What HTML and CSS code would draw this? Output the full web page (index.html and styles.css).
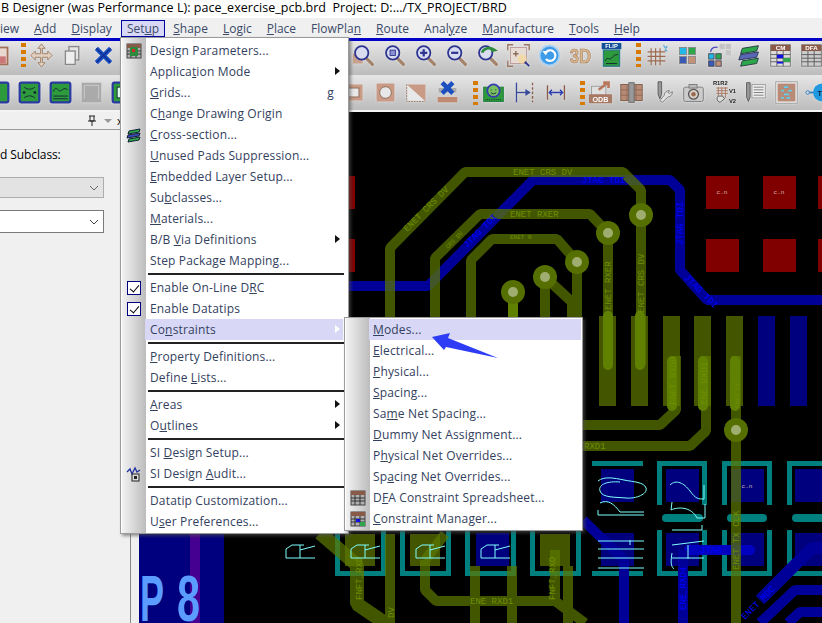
FILE: index.html
```html
<!DOCTYPE html>
<html lang="en">
<head>
  <meta charset="UTF-8" />
  <meta name="viewport" content="width=device-width, initial-scale=1.0"/>
  <title>PCB Designer - Setup menu</title>
  <link rel="stylesheet" href="styles.css">
</head>
<body>

  <!-- shared icon parts -->
  <svg class="defs" width="0" height="0">
    <defs>
      <symbol id="lens" viewBox="0 0 28 28">
        <line x1="17" y1="17" x2="24" y2="24" stroke="#a5826a" stroke-width="3.5" stroke-linecap="round"/>
        <circle cx="12" cy="11" r="7.5" fill="#d9dcef" stroke="#2c3490" stroke-width="2"/>
      </symbol>
      <symbol id="board" viewBox="0 0 28 28">
        <rect x="3" y="3" width="22" height="22" rx="2" fill="#2d9a3c" stroke="#2b3aa0" stroke-width="2.5"/>
      </symbol>
      <symbol id="sheet" viewBox="0 0 16 16">
        <rect x="1" y="1" width="14" height="14" fill="#b0b0b0" stroke="#444"/>
        <rect x="1" y="1" width="14" height="4" fill="#8a5a48"/>
        <path d="M1 8H15M1 11H15M5 5V15M10 5V15" stroke="#333" fill="none"/>
      </symbol>
    </defs>
  </svg>

  <div class="titlebar">B Designer (was Performance L): pace_exercise_pcb.brd &nbsp;Project: D:.../TX_PROJECT/BRD</div>

  <nav class="menubar">
    <span class="mi first">iew</span>
    <span class="mi"><u>A</u>dd</span>
    <span class="mi"><u>D</u>isplay</span>
    <span class="mi open">Set<u>u</u>p</span>
    <span class="mi"><u>S</u>hape</span>
    <span class="mi"><u>L</u>ogic</span>
    <span class="mi"><u>P</u>lace</span>
    <span class="mi">FlowPla<u>n</u></span>
    <span class="mi"><u>R</u>oute</span>
    <span class="mi">Anal<u>y</u>ze</span>
    <span class="mi"><u>M</u>anufacture</span>
    <span class="mi"><u>T</u>ools</span>
    <span class="mi"><u>H</u>elp</span>
  </nav>
  <div class="blueline"></div>

  <div class="toolbar row1">
    <span class="tool"><svg class="ico" viewBox="0 0 28 28"><rect x="4" y="5" width="19" height="19" fill="#e8d8d0" stroke="#a5705a" stroke-width="2"/><rect x="6" y="15" width="15" height="8" fill="#c77"/></svg></span>
    <span class="grip"></span>
    <span class="tool"><svg class="ico" viewBox="0 0 28 28"><path d="M14 1l4 5h-3v6h6V9l5 5-5 5v-3h-6v6h3l-4 5-4-5h3v-6H7v3l-5-5 5-5v3h6V6h-3z" fill="#e2d0c0" stroke="#9a7a60"/></svg></span>
    <span class="tool"><svg class="ico" viewBox="0 0 28 28"><rect x="10" y="4" width="11" height="15" fill="#e4e4e4" stroke="#888" stroke-width="1.5"/><rect x="6" y="9" width="11" height="15" fill="#eee" stroke="#888" stroke-width="1.5"/></svg></span>
    <span class="tool"><svg class="ico" viewBox="0 0 28 28"><path d="M6 6L22 22M22 6L6 22" stroke="#1c4fc0" stroke-width="5"/><path d="M6 6L22 22M22 6L6 22" stroke="#0c2c90" stroke-width="1.5"/></svg></span>
    <span class="gap gap-a"></span>
    <span class="tool"><svg class="ico" viewBox="0 0 28 28"><rect x="2" y="12" width="11" height="11" fill="#c9a08c"/><use href="#lens"/></svg></span>
    <span class="tool"><svg class="ico" viewBox="0 0 28 28"><use href="#lens"/><rect x="9" y="8" width="6" height="6" fill="#8a90d0" stroke="#2c3490"/></svg></span>
    <span class="tool"><svg class="ico" viewBox="0 0 28 28"><use href="#lens"/><path d="M8 11h8M12 7v8" stroke="#2c3490" stroke-width="2.5"/></svg></span>
    <span class="tool"><svg class="ico" viewBox="0 0 28 28"><use href="#lens"/><path d="M8 11h8" stroke="#2c3490" stroke-width="2.5"/></svg></span>
    <span class="tool"><svg class="ico" viewBox="0 0 28 28"><use href="#lens"/><path d="M8 11c1-5 8-7 14-3l-4 1" stroke="#2f8a3c" stroke-width="3" fill="none"/></svg></span>
    <span class="tool"><svg class="ico" viewBox="0 0 28 28"><path d="M2 8V2h6M20 2h6v6M2 20v6h6" fill="none" stroke="#9a7560" stroke-width="1.5"/><rect x="5" y="5" width="18" height="18" fill="#e6dcd4" stroke="#b99" /><path d="M11 9v6M8 12h6" stroke="#8a6a55" stroke-width="1.5"/><circle cx="18" cy="18" r="5" fill="#f2d9a8"/><line x1="21" y1="21" x2="26" y2="26" stroke="#2c3490" stroke-width="2"/></svg></span>
    <span class="tool"><svg class="ico" viewBox="0 0 28 28"><circle cx="14" cy="14" r="11" fill="#3d9be8" stroke="#a8d0f0" stroke-width="2"/><path d="M9 12a6 6 0 1 1 1 6" fill="none" stroke="#fff" stroke-width="2.5"/><path d="M6 9l6 0 -2 5z" fill="#fff"/></svg></span>
    <span class="tool"><svg class="ico" viewBox="0 0 28 28"><text x="2" y="22" class="t3d" textLength="24" lengthAdjust="spacingAndGlyphs">3D</text></svg></span>
    <span class="tool"><svg class="ico" viewBox="0 0 28 28"><rect x="3" y="0" width="22" height="7" fill="#12509a"/><text x="14" y="6" class="tflip">FLIP</text><rect x="5" y="8" width="18" height="18" fill="#2d9a3c" stroke="#2a7a8a" stroke-width="1.5"/><path d="M7 20c3-6 4 0 7-3s3-4 7-4M8 23h12" stroke="#123" fill="none"/></svg></span>
    <span class="grip g2"></span>
    <span class="tool"><svg class="ico" viewBox="0 0 28 28"><path d="M4 10H24M4 15H24M4 20H24M8 6V25M13 6V25M18 6V25" stroke="#9a6a50" stroke-width="1.3"/><path d="M22 2l1 3 3-1-2 3 2 2-3-1" fill="none" stroke="#3a9bd8"/></svg></span>
    <span class="tool"><svg class="ico" viewBox="0 0 28 28"><rect x="5" y="5" width="8" height="8" fill="#22b8e8" stroke="#888"/><rect x="15" y="5" width="8" height="8" fill="#2ca84a" stroke="#888"/><rect x="5" y="15" width="8" height="8" fill="#3a5ab8" stroke="#888"/><rect x="15" y="15" width="8" height="8" fill="#c49078" stroke="#888"/></svg></span>
    <span class="tool"><svg class="ico" viewBox="0 0 28 28"><rect x="15" y="1" width="6" height="6" fill="#c4c4c4"/><rect x="22" y="1" width="6" height="6" fill="#c4c4c4"/><rect x="22" y="8" width="6" height="6" fill="#c4c4c4"/><rect x="3" y="12" width="6" height="6" fill="#22b8e8" stroke="#445"/><rect x="11" y="12" width="6" height="6" fill="#2ca84a" stroke="#445"/><rect x="3" y="20" width="6" height="6" fill="#3a5ab8" stroke="#445"/><rect x="11" y="20" width="6" height="6" fill="#c49078" stroke="#445"/><path d="M5 10c1-5 5-6 8-5" fill="none" stroke="#4a4ac0" stroke-width="1.5"/></svg></span>
    <span class="tool"><svg class="ico" viewBox="0 0 28 28"><path d="M6 6L24 3 22 9 4 12z" fill="#2ca84a" stroke="#234"/><path d="M4 13L24 10 22 16 2 19z" fill="#5a66b8" stroke="#234"/><path d="M6 20L24 17 22 23 4 26z" fill="#2ca84a" stroke="#234"/></svg></span>
    <span class="tool"><svg class="ico" viewBox="0 0 28 28"><rect x="3" y="2" width="22" height="24" fill="#ddd" stroke="#777"/><rect x="3" y="2" width="22" height="7" fill="#8a5a48"/><text x="14" y="8" class="tcm">CM</text><path d="M3 13H25M3 17H25M3 21H25M10 9V26M17 9V26" stroke="#555"/><rect x="10" y="13" width="7" height="4" fill="#1010e0"/><rect x="17" y="17" width="8" height="4" fill="#2ca84a"/><rect x="10" y="21" width="7" height="2" fill="#1010e0"/></svg></span>
    <span class="tool"><svg class="ico" viewBox="0 0 28 28"><rect x="3" y="2" width="22" height="24" fill="#ccc" stroke="#777"/><rect x="3" y="2" width="22" height="7" fill="#8a5a48"/><text x="14" y="8" class="tcm">DFA</text><path d="M3 13H25M3 17H25M3 21H25M10 9V26M17 9V26" stroke="#555"/></svg></span>
  </div>

  <div class="toolbar row2">
    <span class="tool"><svg class="ico" viewBox="0 0 28 28"><use href="#board"/></svg></span>
    <span class="tool"><svg class="ico" viewBox="0 0 28 28"><use href="#board"/><path d="M8 8c4 3 8 3 12 0M8 20c4-3 8-3 12 0" stroke="#123" fill="none"/><circle cx="8" cy="14" r="1.5" fill="#123"/><circle cx="20" cy="14" r="1.5" fill="#123"/></svg></span>
    <span class="tool"><svg class="ico" viewBox="0 0 28 28"><use href="#board"/><path d="M6 13c3-7 4-2 7-1s4-5 9-1M6 18H22M6 21H22" stroke="#123" fill="none"/></svg></span>
    <span class="tool"><svg class="ico" viewBox="0 0 28 28"><rect x="3" y="3" width="22" height="22" fill="#aaa"/><path d="M6 21V6H22V21" fill="none" stroke="#ccc"/></svg></span>
    <span class="tool"><svg class="ico" viewBox="0 0 28 28"><use href="#board"/><rect x="8" y="8" width="12" height="12" fill="#dfe" stroke="#123"/></svg></span>
    <span class="gap gap-b"></span>
    <span class="tool"><svg class="ico" viewBox="0 0 28 28"><rect x="3" y="5" width="20" height="18" rx="1" fill="#c99a85"/><rect x="7" y="9" width="12" height="10" fill="#e8e8e8" stroke="#8a6a55"/></svg></span>
    <span class="tool"><svg class="ico" viewBox="0 0 28 28"><rect x="4" y="4" width="20" height="20" rx="1" fill="#c99a85"/><circle cx="14" cy="14" r="6.5" fill="#e8e8e8" stroke="#8a6a55"/></svg></span>
    <span class="tool"><svg class="ico" viewBox="0 0 28 28"><path d="M3 5H24V24z" fill="#c99a85"/><path d="M3 5V24H24" fill="#e8e8e8" stroke="#8a6a55" stroke-dasharray="2 1"/></svg></span>
    <span class="tool"><svg class="ico" viewBox="0 0 28 28"><rect x="4" y="9" width="20" height="5" fill="#aaa"/><path d="M8 3L20 15M20 3L8 15" stroke="#1c4fc0" stroke-width="5"/><rect x="3" y="19" width="22" height="6" fill="#c08a72"/></svg></span>
    <span class="grip g3"></span>
    <span class="tool"><svg class="ico" viewBox="0 0 28 28"><rect x="3" y="8" width="22" height="16" fill="#2d9a3c" stroke="#1a7a3a"/><path d="M5 22H23" stroke="#123" stroke-dasharray="1 1"/><circle cx="14" cy="12" r="7" fill="#7ac060" stroke="#3a3ab0" stroke-width="2"/><path d="M11 11h1M16 11h1M11 14c2 2 4 2 6 0" stroke="#123" fill="none"/></svg></span>
    <span class="tool"><svg class="ico" viewBox="0 0 28 28"><path d="M5 3V25" stroke="#3a4a9a" stroke-width="1.5"/><path d="M23 3V25" stroke="#8a5a48" stroke-width="1.5" stroke-dasharray="3 2"/><path d="M5 14H20" stroke="#3a4a9a" stroke-width="1.5"/><path d="M15 10l6 4-6 4z" fill="#3a4a9a"/></svg></span>
    <span class="tool"><svg class="ico" viewBox="0 0 28 28"><path d="M5 6V22M24 6V22" stroke="#8a5a48" stroke-width="1.5"/><path d="M7 14H22M10 11l-3 3 3 3M19 11l3 3-3 3" stroke="#2a3ab0" stroke-width="1.5" fill="none"/></svg></span>
    <span class="grip g4"></span>
    <span class="tool"><svg class="ico" viewBox="0 0 28 28"><rect x="4" y="7" width="16" height="10" fill="#e0e0e0" stroke="#999"/><path d="M12 11l10-8M17 3h6v6" stroke="#b9775c" stroke-width="3" fill="none"/><rect x="1" y="16" width="26" height="10" rx="1" fill="#a87a66"/><text x="14" y="24.5" class="todb">ODB</text></svg></span>
    <span class="tool"><svg class="ico" viewBox="0 0 28 28"><rect x="2" y="5" width="24" height="18" fill="#b98a75" stroke="#7a5a48"/><path d="M9 5V23M19 5V23M2 11H26M2 17H26" stroke="#8a6a58"/><rect x="11" y="3" width="6" height="22" fill="#999" stroke="#666"/></svg></span>
    <span class="tool"><svg class="ico" viewBox="0 0 28 28"><path d="M9 2h4v14l-2 5-2-5z" fill="#999" stroke="#555"/><path d="M22 12a5 5 0 0 0-6 5l-5 6 3 2 6-6a5 5 0 0 0 5-6l-3 2-2-1z" fill="#e0e0e0" stroke="#777"/></svg></span>
    <span class="tool"><svg class="ico" viewBox="0 0 28 28"><rect x="3" y="8" width="22" height="16" rx="2" fill="#ccc" stroke="#777"/><rect x="9" y="5" width="9" height="4" fill="#bbb" stroke="#777"/><circle cx="14" cy="16" r="5.5" fill="#d8d0c8" stroke="#555" stroke-width="1.5"/><circle cx="14" cy="16" r="2.5" fill="#9a6a50"/></svg></span>
    <span class="tool"><svg class="ico" viewBox="0 0 28 28"><text x="1" y="6" class="tsm">R1R2</text><path d="M5 9H18M5 12H18M5 15H18M7 8V20M11 8V20M15 8V20" stroke="#a5705a"/><path d="M7 18a4 4 0 0 0 2 7l5-4-2-3z" fill="#ddd" stroke="#555"/><text x="19" y="14" class="tsm">V1</text><text x="19" y="26" class="tsm">V2</text></svg></span>
    <span class="tool"><svg class="ico" viewBox="0 0 28 28"><path d="M4 3h4v16l-2 5-2-5z" fill="#999" stroke="#555"/><rect x="10" y="5" width="15" height="15" fill="#eee" stroke="#999"/><path d="M12 8H23M12 11H23M12 14H23M12 17H23" stroke="#777"/></svg></span>
    <span class="tool"><svg class="ico" viewBox="0 0 28 28"><rect x="2" y="2" width="24" height="24" fill="#eee" stroke="#999"/><rect x="4" y="4" width="20" height="20" fill="#b98a75"/><path d="M11 8h5M8 12h3M16 12h4M11 16h6M8 20h3M14 20h4" stroke="#5cd0f0" stroke-width="2"/></svg></span>
    <span class="tool"><svg class="ico" viewBox="0 0 28 28"><circle cx="3" cy="14" r="2" fill="none" stroke="#2a7ac0"/><path d="M5 14h6" stroke="#2a7ac0" stroke-width="2"/><circle cx="19" cy="14" r="10" fill="#1f9ae0"/><text x="19" y="18" class="ttp">TP</text></svg></span>
  </div>

  <div class="workspace">
    <aside class="panel">
      <div class="panel-head">
        <svg class="pin" viewBox="0 0 10 12" width="10" height="12"><path d="M2 1H8M3 1V6H7V1M1 6H9M5 6V11" stroke="#222" fill="none"/></svg>
        <span class="drop"></span>
        <span class="close">x</span>
      </div>
      <div class="panel-body">
        <p class="lbl">d Subclass:</p>
        <div class="combo off"><svg viewBox="0 0 10 6" width="10" height="6"><path d="M1 1l4 4 4-4" fill="none" stroke="#666"/></svg></div>
        <div class="combo"><svg viewBox="0 0 10 6" width="10" height="6"><path d="M1 1l4 4 4-4" fill="none" stroke="#444"/></svg></div>
      </div>
    </aside>
    <div class="sash"></div>

    <svg class="board" viewBox="139 112 683 511" xmlns="http://www.w3.org/2000/svg">
      <!-- red pads -->
      <g fill="#800000">
        <rect x="345" y="176" width="10" height="33"/><rect x="706" y="176" width="33" height="33"/><rect x="763" y="176" width="33" height="33"/><rect x="818" y="176" width="10" height="33"/>
        <rect x="345" y="239" width="10" height="33"/><rect x="706" y="239" width="33" height="33"/><rect x="763" y="239" width="33" height="33"/><rect x="818" y="239" width="10" height="33"/>
      </g>
      <text x="722" y="194" class="pad-t">c.n</text><text x="779" y="194" class="pad-t">c.n</text>

      <!-- bottom row blue pads and frames -->
      <g fill="#00007f">
        <rect x="139" y="534" width="85" height="90"/>
        <rect x="601" y="469" width="33" height="33"/><rect x="601" y="533" width="33" height="33"/>
        <rect x="666" y="469" width="33" height="33"/><rect x="666" y="533" width="33" height="33"/>
        <rect x="731" y="469" width="33" height="33"/><rect x="731" y="533" width="33" height="33"/>
        <rect x="795" y="469" width="33" height="33"/><rect x="795" y="533" width="33" height="33"/>
        <rect x="476" y="533" width="33" height="33"/>
      </g>
      <g fill="#007f7f">
        <path id="fr1" d="M592 461h51v5h-5v105h5v5h-51v-5h5v-105h-5zM597 466v105h41v-105z" fill-rule="evenodd"/>
        <path d="M657 461h50v5h-50zM657 461h5v44h-5zM702 461h5v44h-5zM657 530h5v46h-5zM702 530h5v46h-5zM657 571h50v5h-50z"/>
        <rect x="662" y="514" width="41" height="8" rx="4"/>
        <path d="M722 461h50v5h-50zM722 461h5v44h-5zM767 461h5v44h-5zM722 530h5v46h-5zM767 530h5v46h-5zM722 571h50v5h-50z"/>
        <rect x="727" y="514" width="40" height="8" rx="4"/>
        <path d="M787 461h40v5h-40zM787 461h5v44h-5zM787 530h5v46h-5zM787 571h40v5h-40z"/>
        <rect x="792" y="514" width="40" height="8" rx="4"/>
        <path d="M335 531h5v40h41v-40h5v45h-51zM400 531h5v40h41v-40h5v45h-51zM465 531h5v40h41v-40h5v45h-51zM530 531h5v40h41v-40h5v45h-51z"/>
      </g>

      <!-- blue traces -->
      <g fill="none" stroke="#000099" stroke-linejoin="bevel">
        <polyline stroke-width="10" points="138,286 428,286 533,180 670,180 680,190 680,270 707,300 822,300"/>
        <polyline stroke-width="10" points="583,520 624,560 624,623"/>
        <polyline stroke-width="10" points="689,550 750,550" stroke="#0000c0" stroke-linecap="round"/>
        <polyline stroke-width="10" points="683,550 683,623"/>
        <polyline stroke-width="12" points="822,548 812,548 760,600"/>
        <polyline stroke-width="10" points="822,590 795,590 760,623"/>
        <polyline stroke-width="10" points="822,612 800,612 788,623"/>
      </g>
      <rect x="758" y="316" width="17" height="90" fill="#00007f"/>
      <rect x="790" y="316" width="17" height="90" fill="#00007f"/>
      <rect x="190" y="534" width="10" height="90" fill="#8000a0" opacity=".55"/>

      <!-- olive traces -->
      <g fill="#445500">
        <rect x="599" y="316" width="17" height="90"/><rect x="631" y="316" width="17" height="90"/>
        <rect x="663" y="316" width="17" height="90"/><rect x="694" y="316" width="17" height="90"/><rect x="726" y="316" width="17" height="90"/>
        <rect x="345" y="534" width="30" height="32"/><rect x="410" y="534" width="30" height="32"/><rect x="540" y="534" width="30" height="32"/>
      </g>
      <g fill="none" stroke="#5c7800" stroke-linejoin="bevel" opacity=".72">
        <polyline stroke-width="10" points="390,323 390,248 465,172 623,172 641,190 641,365"/>
        <polyline stroke-width="10" points="435,323 435,258 480,214 590,214 608,233 608,365"/>
        <polyline stroke-width="10" points="471,323 471,260 492,239 557,239 577,262 577,323"/>
        <polyline stroke-width="10" points="545,277 572,302 572,323"/>
        <polyline stroke-width="10" points="545,277 545,323"/>
        <polyline stroke-width="10" points="513,292 513,323"/>
        <polyline stroke-width="10" points="583,425 660,425 676,410 676,356" />
        <polyline stroke-width="10" points="583,446 690,446 706,431 706,356"/>
        <polyline stroke-width="10" points="736,356 736,623"/>
        <polyline stroke-width="14" points="320,533 357,565 357,604 385,623"/>
        <polyline stroke-width="10" points="390,534 390,623"/>
        <polyline stroke-width="10" points="425,560 425,590 436,601 555,601 585,623"/>
        <polyline stroke-width="10" points="445,534 425,560"/>
        <polyline stroke-width="10" points="475,566 475,623"/>
        <polyline stroke-width="10" points="512,566 512,623"/>
        <polyline stroke-width="10" points="555,550 555,601"/>
        <polyline stroke-width="10" points="568,566 568,623"/>
      </g>
      <g fill="none" stroke="#5f8000" stroke-linecap="round" stroke-width="10">
        <line x1="608" y1="316" x2="608" y2="365"/><line x1="640" y1="316" x2="640" y2="365"/>
        <line x1="672" y1="361" x2="672" y2="406"/><line x1="703" y1="361" x2="703" y2="406"/><line x1="735" y1="361" x2="735" y2="406"/>
        <line x1="513" y1="292" x2="513" y2="316"/>
      </g>

      <!-- vias -->
      <g fill="#557000"><circle cx="513" cy="292" r="12"/><circle cx="545" cy="277" r="12"/><circle cx="577" cy="262" r="12"/><circle cx="608" cy="233" r="12"/><circle cx="641" cy="215" r="12"/><circle cx="736" cy="430" r="12"/></g>
      <g fill="#a0ad70"><circle cx="513" cy="292" r="5"/><circle cx="545" cy="277" r="5"/><circle cx="577" cy="262" r="5"/><circle cx="608" cy="233" r="5"/><circle cx="641" cy="215" r="5"/><circle cx="736" cy="430" r="5"/></g>

      <!-- net names -->
      <g class="net olive">
        <text x="513" y="175">ENET CRS DV</text>
        <text x="510" y="217">ENET RXER</text>
        <text x="510" y="239" class="tiny">ENET R</text>
        <text x="407" y="232" transform="rotate(-45 407 232)">ENET CRS DV</text>
        <text x="448" y="249" class="tiny" transform="rotate(-45 448 249)">CRS DV</text>
        <text transform="translate(611 310) rotate(-90)">ENET RXER</text>
        <text transform="translate(644 313) rotate(-90)">ENET CRS DV</text>
        <text transform="translate(676 405) rotate(-90)">FNFT RXD0</text>
        <text transform="translate(707 405) rotate(-90)">ENE RXD1</text>
        <text transform="translate(739 408) rotate(-90)" class="tiny">ENET TX</text>
        <text x="584" y="449">RXD1</text>
        <text transform="translate(739 570) rotate(-90)">ENET TX CLK</text>
        <text transform="translate(362 600) rotate(-90)">FNFT_RXD</text>
        <text transform="translate(394 618) rotate(-90)">DV</text>
        <text x="470" y="604">ENE  RXD1</text>
        <text transform="translate(555 600) rotate(-90)">FNFT_RXD</text>
      </g>
      <g class="net blue">
        <text x="582" y="183">JTAG TDI</text>
        <text x="467" y="248" transform="rotate(-45 467 248)">JTAG TDI</text>
        <text transform="translate(683 245) rotate(-90)">JTAG TDI</text>
        <text x="684" y="278" transform="rotate(45 684 278)">JTAG TDI</text>
        <text x="700" y="553">JTAG</text>
        <text transform="translate(686 610) rotate(-90)">ENE_RXD4</text>
        <text x="745" y="620" transform="rotate(-45 745 620)">ENET MDC</text>
      </g>

      <!-- silkscreen -->
      <g fill="none" stroke="#7fffff">
        <path d="M598 481c6-5 16-3 26-1s20 2 22 8-10 11-20 10-24 0-26-7 8-10 20-9M600 503c8-4 14 1 20 9l24 0M598 510v5h46M598 541h46M630 545v-5M598 549c10 0 20 0 46 0M598 558h45M598 568h46"/>
        <path d="M670 485c6-6 14-2 20 6s8 8 14 8v-14M672 502l-1 8c6-3 20-4 26 8h8v-14M672 530h30v-5M672 553c-2 12 0 14 2 16M672 545l32-4M688 545v14M672 558h32"/>
        <path d="M286 558v-9l6-4h12M300 545v13M300 550l15-4M286 558h29"/>
        <path d="M351 558v-9l6-4h12M365 545v13M365 550l15-4M351 558h29"/>
        <path d="M416 558v-9l6-4h12M430 545v13M430 550l15-4M416 558h29"/>
        <path d="M481 558v-9l6-4h12M495 545v13M495 550l15-4M481 558h29"/>
      </g>
      <text x="747" y="488" class="pad-t">c.n</text>
      <text x="140" y="621" class="p8" textLength="24" lengthAdjust="spacingAndGlyphs">P</text>
      <text x="177" y="621" class="p8" textLength="23" lengthAdjust="spacingAndGlyphs">8</text>
    </svg>
  </div>

  <!-- Setup menu -->
  <ul class="menu setup">
    <li><span class="gut"><svg width="16" height="16" viewBox="0 0 16 16"><use href="#sheet"/><rect x="4" y="4" width="8" height="9" fill="#2d8a3c"/><rect x="6" y="6" width="3" height="3" fill="#d22"/></svg></span><span class="txt">Desi<u>g</u>n Parameters...</span></li>
    <li class="sub"><span class="gut"></span><span class="txt">Applica<u>t</u>ion Mode</span></li>
    <li><span class="gut"></span><span class="txt"><u>G</u>rids...</span><span class="key">g</span></li>
    <li><span class="gut"></span><span class="txt">C<u>h</u>ange Drawing Origin</span></li>
    <li><span class="gut"><svg width="16" height="16" viewBox="0 0 16 16"><path d="M3 4L14 2 13 5 2 7z" fill="#2ca84a" stroke="#123"/><path d="M2 8L14 6 13 9 1 11z" fill="#3a4ab8" stroke="#123"/><path d="M3 12L14 10 13 13 2 15z" fill="#2ca84a" stroke="#123"/></svg></span><span class="txt"><u>C</u>ross-section...</span></li>
    <li><span class="gut"></span><span class="txt"><u>U</u>nused Pads Suppression...</span></li>
    <li><span class="gut"></span><span class="txt"><u>E</u>mbedded Layer Setup...</span></li>
    <li><span class="gut"></span><span class="txt">Su<u>b</u>classes...</span></li>
    <li><span class="gut"></span><span class="txt"><u>M</u>aterials...</span></li>
    <li class="sub"><span class="gut"></span><span class="txt">B/B <u>V</u>ia Definitions</span></li>
    <li><span class="gut"></span><span class="txt">Step Package Mapping...</span></li>
    <li class="sep"></li>
    <li><span class="gut"><span class="check"></span></span><span class="txt">Enable On-Line D<u>R</u>C</span></li>
    <li><span class="gut"><span class="check"></span></span><span class="txt">Enable Datatips</span></li>
    <li class="sub hot"><span class="gut"></span><span class="txt">Co<u>n</u>straints</span></li>
    <li class="sep"></li>
    <li><span class="gut"></span><span class="txt"><u>P</u>roperty Definitions...</span></li>
    <li><span class="gut"></span><span class="txt">Define <u>L</u>ists...</span></li>
    <li class="sep"></li>
    <li class="sub"><span class="gut"></span><span class="txt"><u>A</u>reas</span></li>
    <li class="sub"><span class="gut"></span><span class="txt">O<u>u</u>tlines</span></li>
    <li class="sep"></li>
    <li><span class="gut"></span><span class="txt">SI <u>D</u>esign Setup...</span></li>
    <li><span class="gut"><svg width="16" height="16" viewBox="0 0 16 16"><path d="M1 6l3-3 2 5 3-6 2 4 3-2" fill="none" stroke="#2030a0" stroke-width="1.3"/><rect x="6" y="8" width="7" height="7" fill="#ddd" stroke="#222"/><rect x="8" y="10" width="3" height="3" fill="#222"/></svg></span><span class="txt">SI Design <u>A</u>udit...</span></li>
    <li class="sep"></li>
    <li><span class="gut"></span><span class="txt">Datatip Customization...</span></li>
    <li><span class="gut"></span><span class="txt">U<u>s</u>er Preferences...</span></li>
  </ul>

  <!-- Constraints submenu -->
  <ul class="menu constraints">
    <li class="hot"><span class="gut"></span><span class="txt"><u>M</u>odes...</span></li>
    <li><span class="gut"></span><span class="txt"><u>E</u>lectrical...</span></li>
    <li><span class="gut"></span><span class="txt"><u>P</u>hysical...</span></li>
    <li><span class="gut"></span><span class="txt"><u>S</u>pacing...</span></li>
    <li><span class="gut"></span><span class="txt">Sa<u>m</u>e Net Spacing...</span></li>
    <li><span class="gut"></span><span class="txt"><u>D</u>ummy Net Assignment...</span></li>
    <li><span class="gut"></span><span class="txt">P<u>h</u>ysical Net Overrides...</span></li>
    <li><span class="gut"></span><span class="txt">Sp<u>a</u>cing Net Overrides...</span></li>
    <li><span class="gut"><svg width="16" height="16" viewBox="0 0 16 16"><use href="#sheet"/></svg></span><span class="txt">D<u>F</u>A Constraint Spreadsheet...</span></li>
    <li><span class="gut"><svg width="16" height="16" viewBox="0 0 16 16"><use href="#sheet"/><rect x="6" y="8" width="4" height="3" fill="#1010e0"/><rect x="10" y="11" width="5" height="4" fill="#2ca84a"/></svg></span><span class="txt"><u>C</u>onstraint Manager...</span></li>
  </ul>

  <svg class="pointer" width="72" height="28" viewBox="0 0 72 28"><path d="M0 6L18 2 16 7 66 27 14 16 12 19z" fill="#2f3cf5"/></svg>

</body>
</html>
```

FILE: styles.css
```css
* {
  box-sizing: border-box;
}
html, body {
  height: 100%;
}
body {
  margin: 0;
  width: 822px;
  height: 623px;
  overflow: hidden;
  position: relative;
  background: #f0f0f0;
  color: #000;
  font-family: 'Open Sans', 'Noto Sans', sans-serif;
  display: flex;
  flex-direction: column;
}
.defs {
  position: absolute;
}

/* title and menu bar */
.titlebar {
  height: 18px;
  flex: none;
  background: #fff;
  font-size: 12.5px;
  line-height: 15px;
  letter-spacing: 0.04px;
  padding-left: 1px;
  white-space: nowrap;
  overflow: hidden;
}
.menubar {
  height: 20px;
  flex: none;
  background: #f0f0f0;
  display: flex;
  align-items: center;
  font-size: 12px;
  color: #3a4a68;
  white-space: nowrap;
}
.mi {
  margin-left: 15px;
}
.mi.first {
  margin-left: 0;
}
.mi.open {
  margin-left: 9px;
  margin-right: -7px;
  padding: 0 5px;
  height: 17px;
  line-height: 15px;
  background: #d8d8f6;
  border: 1px solid #0000a0;
}
.blueline {
  height: 3px;
  flex: none;
  background: #0000c8;
}

/* toolbars */
.toolbar {
  flex: none;
  display: flex;
  align-items: center;
  overflow: hidden;
  background: linear-gradient(#e6e6e6, #bcbcbc);
}
.row1 {
  height: 34px;
  padding-bottom: 6px;
  margin-left: -16px;
  width: 838px;
}
.row2 {
  height: 37px;
  margin-left: -17px;
  width: 839px;
  border-bottom: 2px solid #f4f4f4;
}
.tool {
  width: 31px;
  height: 28px;
  flex: none;
  display: flex;
  align-items: center;
  justify-content: center;
}
.ico {
  width: 25px;
  height: 25px;
  filter: drop-shadow(0 0 1px #e4e4e4);
}
.gap {
  flex: none;
}
.gap-a {
  width: 229px;
}
.gap-b {
  width: 201px;
}
.grip {
  width: 5px;
  height: 24px;
  flex: none;
  margin-left: 6px;
  background: repeating-linear-gradient(#d87a00 0 4px, transparent 4px 7px);
}
.g2 {
  margin-left: 9px;
}
.g3 {
  margin-left: 10px;
}
.g4 {
  margin-left: 9px;
}
.t3d {
  font-family: 'Liberation Sans', sans-serif;
  font-size: 22px;
  font-weight: bold;
  fill: #d8b48c;
  stroke: #a5805f;
  stroke-width: 0.7;
}
.tflip, .tcm, .todb, .ttp {
  font-family: 'Liberation Sans', sans-serif;
  font-weight: bold;
  text-anchor: middle;
  fill: #fff;
}
.tflip {
  font-size: 6.5px;
}
.tcm {
  font-size: 7px;
}
.todb {
  font-size: 8px;
}
.ttp {
  font-size: 8px;
  fill: #123;
}
.tsm {
  font-family: 'Liberation Sans', sans-serif;
  font-size: 6.5px;
  font-weight: bold;
  fill: #222;
}

/* left panel and board */
.workspace {
  flex: 1;
  min-height: 0;
  display: flex;
}
.panel {
  width: 131px;
  flex: none;
  border-right: 1px solid #888;
  overflow: hidden;
}
.panel-head {
  height: 18px;
  display: flex;
  align-items: center;
  border-bottom: 1px solid #999;
  padding-left: 87px;
  font-size: 11px;
}
.drop {
  width: 0;
  height: 0;
  margin-left: 7px;
  border: 4px solid transparent;
  border-top: 4px solid #999;
  border-bottom: 0;
}
.close {
  margin-left: 5px;
}
.panel-body {
  font-size: 12px;
  letter-spacing: -0.1px;
}
.lbl {
  margin: 16px 0 14px;
  line-height: 17px;
}
.combo {
  width: 104px;
  height: 23px;
  margin-bottom: 12px;
  background: #fff;
  border: 1px solid #7a7a7a;
  border-left: 0;
  display: flex;
  align-items: center;
  justify-content: flex-end;
  padding-right: 4px;
}
.combo.off {
  height: 21px;
  background: #e3e3e3;
  border-color: #adadad;
}
.sash {
  width: 8px;
  flex: none;
}
.board {
  flex: 1;
  min-width: 0;
  height: 511px;
  background: #000;
  display: block;
}
.net text {
  font-family: 'Liberation Mono', monospace;
  font-size: 9px;
}
.net text.tiny {
  font-size: 6px;
}
.olive {
  fill: #6f8f00;
}
.blue {
  fill: #0000ff;
}
.pad-t {
  font-family: 'Liberation Mono', monospace;
  font-size: 6px;
  fill: #d8b8b8;
  text-anchor: middle;
}
.p8 {
  font-family: 'Liberation Sans', sans-serif;
  font-size: 64px;
  font-weight: bold;
  fill: #5a9cff;
}

/* drop down menus */
.menu {
  position: absolute;
  margin: 0;
  padding: 1px;
  list-style: none;
  background: linear-gradient(90deg, #f2f2f2, #bcbcbc) 1px 0 / 24px 100% no-repeat, #fff;
  border: 1px solid #9a9a9a;
  box-shadow: 2px 2px 3px rgba(80, 80, 80, .6);
  font-size: 12px;
  letter-spacing: 0.16px;
  color: #33415e;
}
.setup {
  left: 120px;
  top: 37px;
  width: 229px;
  height: 497px;
  padding-top: 2px;
}
.constraints {
  left: 344px;
  top: 317px;
  width: 239px;
  height: 214px;
}
.constraints .txt {
  padding-left: 4px;
}
.menu li {
  height: 21px;
  display: flex;
  align-items: center;
  position: relative;
  white-space: nowrap;
}
.menu li.sep {
  height: 6px;
  margin-left: 26px;
  margin-right: 3px;
}
.menu li.sep::after {
  content: "";
  width: 100%;
  height: 2px;
  background: #222;
}
.gut {
  width: 23px;
  flex: none;
  display: flex;
  justify-content: center;
}
.txt {
  padding-left: 5px;
  flex: 1;
  line-height: 21px;
}
.key {
  margin-right: 13px;
}
.menu li.hot .txt {
  background: #d8d8f6;
  height: 21px;
}
.setup li.hot .txt {
  margin-right: 4px;
}
.menu li.sub::after {
  content: "";
  position: absolute;
  right: 7px;
  top: 6px;
  border-left: 5px solid #111;
  border-top: 4px solid transparent;
  border-bottom: 4px solid transparent;
}
.menu li.sub.hot::after {
  border-left-color: #fff;
  right: 7px;
}
.check {
  width: 14px;
  height: 14px;
  background: #fff;
  border: 1px solid #000080;
  position: relative;
}
.check::after {
  content: "";
  position: absolute;
  left: 4px;
  top: 1px;
  width: 4px;
  height: 8px;
  border: solid #000;
  border-width: 0 1.5px 1.5px 0;
  transform: rotate(40deg);
}
.pointer {
  position: absolute;
  left: 432px;
  top: 331px;
}
```
